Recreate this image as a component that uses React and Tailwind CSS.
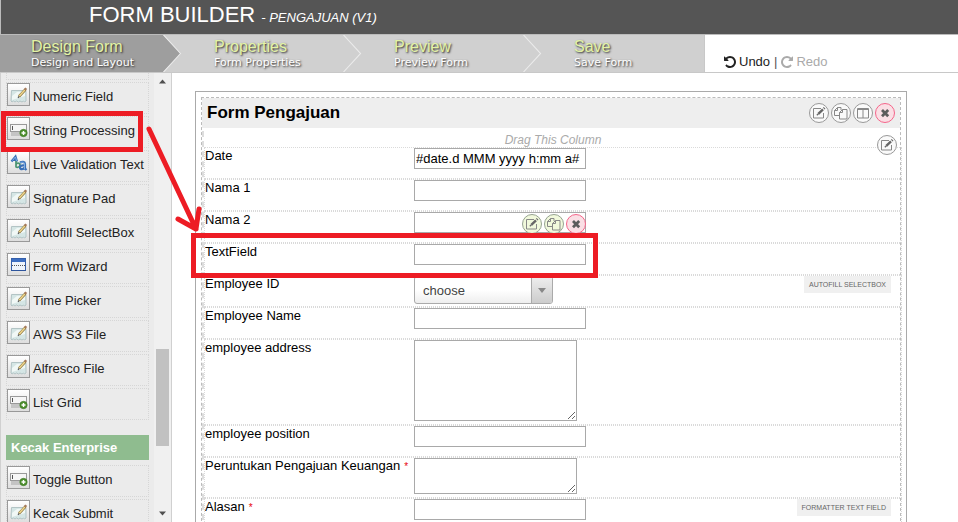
const steps = [
  { title: "Design Form", note: "Design and Layout", active: true },
  { title: "Properties", note: "Form Properties" },
  { title: "Preview", note: "Preview Form" },
  { title: "Save", note: "Save Form", last: true },
];

const palette = [
  ["Numeric Field", "edit"],
  ["String Processing", "add"],
  ["Live Validation Text", "text"],
  ["Signature Pad", "edit"],
  ["Autofill SelectBox", "edit"],
  ["Form Wizard", "window"],
  ["Time Picker", "edit"],
  ["AWS S3 File", "edit"],
  ["Alfresco File", "edit"],
  ["List Grid", "add"],
];

const enterprise = [
  ["Toggle Button", "add"],
  ["Kecak Submit", "edit"],
];

const textShadow = "[text-shadow:1px_1px_2px_#222]";

function Chevron({ active }) {
  return (
    <svg className="h-full w-[19px] shrink-0" viewBox="0 0 19 37" aria-hidden="true">
      {active && <path d="M0 0 L18 18.5 L0 37 Z" fill="#9e9e9e" />}
      <path d="M0.5 0 L17.5 18.5 L0.5 37" fill="none" stroke="#ececec" strokeWidth="1.1" />
    </svg>
  );
}

function Step({ title, note, active, last }) {
  return (
    <a
      href="#"
      className={`flex h-full bg-[#d0d0d0] ${active ? "w-[182px]" : last ? "w-[162px]" : "w-[180px]"}`}
    >
      <span className={`flex h-full flex-1 flex-col whitespace-nowrap pt-[3px] ${active ? "bg-[#9e9e9e] pl-[31px]" : "pl-8"}`}>
        <span className={`text-[16px] leading-[18px] text-[#e3f3a5] ${textShadow}`}>{title}</span>
        <span className={`font-['DejaVu_Sans',sans-serif] text-[11px] leading-[13px] text-white ${textShadow}`}>{note}</span>
      </span>
      {!last && <Chevron active={active} />}
    </a>
  );
}

function RotateIcon({ forward }) {
  return (
    <svg className="size-3" viewBox="0 128 1536 1536" fill="currentColor" aria-hidden="true">
      <path
        transform={forward ? "matrix(-1 0 0 1 1536 0)" : undefined}
        d="M1536 896q0 156-61 298t-164 245-245 164-298 61q-172 0-327-72.5t-264-204.5q-7-10-6.5-22.5t8.5-20.5l137-138q10-9 25-9 16 2 23 12 73 95 179 147t225 52q104 0 198.500-40.500t163.500-109.500 109.500-163.500 40.500-198.500-40.500-198.500-109.500-163.500-163.500-109.500-198.500-40.500q-98 0-188 35.500t-160 101.500l137 138q31 30 14 69-17 40-59 40h-448q-26 0-45-19t-19-45v-448q0-42 40-59 39-17 69 14l130 129q107-101 244.500-156.500t284.500-55.500q156 0 298 61t245 164 164 245 61 298z"
      />
    </svg>
  );
}

function PaletteIcon({ kind }) {
  return (
    <span className="h-[23px] w-[23px] shrink-0 border border-[#999] bg-linear-to-b from-white to-[#dedede]">
      <svg viewBox="0 0 21 21" className="block h-full w-full" aria-hidden="true">
        {kind === "edit" && (
          <g>
            <path d="M3.5 6.500h13.500l1 1v9.500l-1.500 1-1-1-1.500 1-2-1-1.500 1-2-1-1.500 1-1.500-1-1.500 1-1-1z" fill="#d5e6e5" stroke="#b3c4c5" />
            <path d="M4 12 L9 8 L17 7.500 L17 12 L4 16 Z" fill="#f1f8f6" />
            <path d="M11 12.500 L17.500 5.500" stroke="#8f7a45" strokeWidth="2.600" />
            <path d="M11.200 12.200 L16.800 6" stroke="#f0d68c" strokeWidth="1.500" />
            <path d="M16.800 5.800 L18.300 4.200" stroke="#a67a5c" strokeWidth="2.400" />
            <path d="M10 13.700 L11.200 12.400" stroke="#555" strokeWidth="1.300" />
          </g>
        )}
        {kind === "add" && (
          <g>
            <rect x="3" y="12" width="15" height="6" fill="#c4c4c4" />
            <rect x="2.5" y="6.500" width="16" height="7" fill="#f6f6f6" stroke="#999" />
            <path d="M4.500 8v4" stroke="#555" />
            <circle cx="15.5" cy="15" r="3.700" fill="#4d8f2e" stroke="#3a7524" strokeWidth="0.600" />
            <path d="M15.500 13v4M13.500 15h4" stroke="#fff" strokeWidth="1.400" />
          </g>
        )}
        {kind === "window" && (
          <g>
            <rect x="3.500" y="4.500" width="14" height="12" fill="#eef4fb" stroke="#3560ac" />
            <rect x="4" y="5" width="13" height="3" fill="#3d6fc2" />
            <path d="M4 11.500h13" stroke="#555" strokeDasharray="1 1" />
            <path d="M3 16.500h15" stroke="#2d549c" />
          </g>
        )}
        {kind === "text" && (
          <g fill="none">
            <path d="M3.500 9.500 L7.500 4.500 L9 9.500 M4.500 8h4.500" stroke="#3a70b8" strokeWidth="2.200" />
            <path d="M4.500 8.500 L7.400 5 L8.600 9" stroke="#8fbcec" strokeWidth="0.800" />
            <path d="M8 9v6.500 M8 13c0-2.500 4-2.500 4 0s-4 3-4 1.500" stroke="#4b9472" strokeWidth="1.700" />
            <path d="M12 10.500c2-1 5-1 5 1.500v4.500l1.500 1.500 M16.500 13.500c-3-.5-4.500.5-4.500 2.300s3.500 2 4.500-.3" stroke="#3a70b8" strokeWidth="2.200" />
            <path d="M12.500 10.500c2-.8 4-.4 4 1.500v5" stroke="#8fbcec" strokeWidth="0.800" />
          </g>
        )}
      </svg>
    </span>
  );
}

function PaletteItem({ name, kind }) {
  return (
    <li className="flex h-8 cursor-move items-start gap-[3px] border border-dotted border-[#d6d6d6] whitespace-nowrap">
      <PaletteIcon kind={kind} />
      <span className="pt-[6px] leading-4">{name}</span>
    </li>
  );
}

function PaletteList({ items }) {
  return (
    <ul className="flex flex-col gap-0.5">
      {items.map(([name, kind]) => (
        <PaletteItem key={name} name={name} kind={kind} />
      ))}
    </ul>
  );
}

const tones = {
  plain: "border-[#999] bg-[#fafafa]",
  green: "border-[#96a391] bg-[#f1f9dc]",
  red: "border-[#f5658a] bg-[#fadfe5]",
};

function RoundButton({ icon, label, tone = "plain" }) {
  return (
    <button type="button" aria-label={label} className={`h-5 w-5 rounded-full border ${tones[tone]}`}>
      <svg viewBox="0 0 18 18" className="block h-full w-full" fill="none" stroke="#888" aria-hidden="true">
        {icon === "edit" && (
          <g>
            <path d="M11 4.500h-7.500v9.500h10v-5" />
            <path d="M8.300 9.800 L13 5.300" stroke="#666" strokeWidth="2.400" />
            <path d="M6.800 11.300 L8.500 9.800" stroke="#666" strokeWidth="1.200" />
            <path d="M13.800 4.600l.8-.8" stroke="#666" strokeWidth="2.400" />
          </g>
        )}
        {icon === "copy" && (
          <g>
            <path d="M7 11.500h-4.500v-5l3-3h3.500v2.500 M5.500 3.500v3h-3" />
            <path d="M10.500 5.500h4.500v9.500h-7.500v-6.500z M10.500 5.500v3h-3" />
          </g>
        )}
        {icon === "columns" && <path d="M3.500 4.500h11v9.500h-11z M3.500 5.500h11 M9 5v9" />}
        {icon === "delete" && <path d="M6 6l6.200 6.200M12.200 6l-6.200 6.200" stroke="#5c5c5c" strokeWidth="2.800" />}
      </svg>
    </button>
  );
}

function Field({ id, label, required, height = "h-8", tag, children }) {
  return (
    <div className={`relative flex items-start border border-dotted border-[#dadada] ${height}`}>
      <label htmlFor={id} className="w-[209px] shrink-0 whitespace-nowrap leading-4">
        {label}
        {required && <span className="ml-1 text-[10px] text-red-600">*</span>}
      </label>
      {children}
      {tag && (
        <span className="absolute top-0 right-[10px] h-[17px] bg-[#f0f0f0] px-[5px] text-[7px] leading-[17px] text-[#666] uppercase">
          {tag}
        </span>
      )}
    </div>
  );
}

function TextBox({ id, value = "" }) {
  return <input id={id} type="text" defaultValue={value} className="h-[21px] w-[172px] border border-[#a9a9a9] bg-white px-px" />;
}

function TextArea({ id, height }) {
  return <textarea id={id} className={`block w-[163px] resize border border-[#a9a9a9] bg-white ${height}`} />;
}

export default function App() {
  return (
    <div className="relative flex h-screen flex-col overflow-hidden bg-white font-['Liberation_Sans',Arial,sans-serif] text-[13px] text-black">
      <header className="flex h-[35px] shrink-0 items-baseline gap-[6px] border-b border-l border-[#bbb] bg-[#555] pt-[2px] pl-[88px] text-white">
        <h1 className="text-[22px] leading-[26px]">FORM BUILDER</h1>
        <span className="text-[13px] italic">- PENGAJUAN (V1)</span>
      </header>

      <nav className="flex h-[38px] shrink-0 border-b border-[#c8c8c8]">
        {steps.map((step) => (
          <Step key={step.title} {...step} />
        ))}
        <div className="flex flex-1 items-end gap-1 border-l border-[#c8c8c8] pb-[2px] pl-[19px] leading-4">
          <button type="button" className="flex items-center gap-[3px] text-[#222]">
            <RotateIcon />
            Undo
          </button>
          <span className="text-[#555]">|</span>
          <button type="button" className="flex items-center gap-[3px] text-[#aaa]">
            <RotateIcon forward />
            Redo
          </button>
        </div>
      </nav>

      <div className="flex min-h-0 flex-1">
        <aside className="flex w-[172px] shrink-0 border-x border-[#d0d0d0] bg-[#ebebeb] text-[#222]">
          <div className="min-w-0 flex-1 overflow-hidden pr-[5px] pl-[5px]">
            <div className="mb-0.5 h-[7px] border border-t-0 border-dotted border-[#d6d6d6]" />
            <PaletteList items={palette} />
            <h2 className="mt-[15px] mb-[5px] h-[25px] bg-[#8fbc8f] pl-[5px] font-bold leading-[25px] text-white">Kecak Enterprise</h2>
            <PaletteList items={enterprise} />
          </div>
          <div className="flex w-[17px] shrink-0 flex-col items-center bg-[#f0f0f0]">
            <svg viewBox="0 0 17 17" className="size-[17px]" aria-hidden="true">
              <path d="M5 10.500 L8.500 6.500 L12 10.500 Z" fill="#505050" />
            </svg>
            <div className="flex w-full flex-1 flex-col items-center pt-[259px]">
              <div className="h-[97px] w-[13px] bg-[#c1c1c1]" />
            </div>
            <svg viewBox="0 0 17 17" className="size-[17px]" aria-hidden="true">
              <path d="M5 6.500 L8.500 10.500 L12 6.500 Z" fill="#505050" />
            </svg>
          </div>
        </aside>

        <main className="min-w-0 flex-1 overflow-hidden pt-[18px] pr-[51px] pl-[23px]">
          <div className="border border-[#aaa] p-[5px]">
            <section className="border border-dashed border-[#bbb]">
              <div className="flex h-[30px] items-center justify-between bg-[#eee] pr-[5px] pl-[5px]">
                <h2 className="text-[17px] leading-5 font-bold">Form Pengajuan</h2>
                <div className="flex gap-0.5">
                  <RoundButton icon="edit" label="Edit section" />
                  <RoundButton icon="copy" label="Copy section" />
                  <RoundButton icon="columns" label="Section columns" />
                  <RoundButton icon="delete" label="Delete section" tone="red" />
                </div>
              </div>

              <div className="relative mt-[3px] -mr-0.5 border-l-2 border-dashed border-[#ddd]">
                <p className="h-4 text-center text-[12px] leading-[18px] text-[#aaa] italic">Drag This Column</p>
                <div className="absolute top-1 right-[5px] z-10 flex">
                  <RoundButton icon="edit" label="Edit column" />
                </div>

                <Field id="date" label="Date">
                  <TextBox id="date" value="#date.d MMM yyyy h:mm a#" />
                </Field>
                <Field id="nama1" label="Nama 1">
                  <TextBox id="nama1" />
                </Field>
                <Field id="nama2" label="Nama 2">
                  <div className="relative flex">
                    <TextBox id="nama2" />
                    <div className="absolute top-0.5 right-0 flex gap-0.5">
                      <RoundButton icon="edit" label="Edit field" tone="green" />
                      <RoundButton icon="copy" label="Copy field" tone="green" />
                      <RoundButton icon="delete" label="Delete field" tone="red" />
                    </div>
                  </div>
                </Field>
                <Field id="textfield" label="TextField">
                  <TextBox id="textfield" />
                </Field>
                <Field id="employeeId" label="Employee ID" tag="Autofill SelectBox">
                  <div className="relative flex h-7">
                    <select
                      id="employeeId"
                      className="h-7 w-[139px] appearance-none rounded-[3px] border border-[#aaa] bg-linear-to-b from-white from-50% to-[#eee] pt-0.5 pl-2 text-[#444]"
                    >
                      <option>choose</option>
                    </select>
                    <span className="pointer-events-none absolute top-px right-px flex h-[26px] w-[21px] items-center justify-center rounded-r-[2px] border-l border-[#aaa] bg-linear-to-b from-[#eee] to-[#ccc]">
                      <svg viewBox="0 0 8 5" className="h-[5px] w-2" aria-hidden="true">
                        <path d="M0 0h8L4 5z" fill="#888" />
                      </svg>
                    </span>
                  </div>
                </Field>
                <Field id="employeeName" label="Employee Name">
                  <TextBox id="employeeName" />
                </Field>
                <Field id="employeeAddress" label="employee address" height="h-[86px]">
                  <TextArea id="employeeAddress" height="h-[81px]" />
                </Field>
                <Field id="employeePosition" label="employee position">
                  <TextBox id="employeePosition" />
                </Field>
                <Field id="peruntukan" label="Peruntukan Pengajuan Keuangan" required height="h-[41px]">
                  <TextArea id="peruntukan" height="h-9" />
                </Field>
                <Field id="alasan" label="Alasan" required tag="Formatter Text Field">
                  <TextBox id="alasan" />
                </Field>
              </div>
            </section>
          </div>
        </main>
      </div>

      {/* Red callouts linking the palette item to the field it creates */}
      <svg
        className="pointer-events-none absolute top-0 left-0 z-20 h-[300px] w-[600px]"
        viewBox="0 0 600 300"
        fill="none"
        stroke="#ed1c24"
        strokeWidth="5"
        aria-hidden="true"
      >
        <rect x="3.5" y="113.5" width="137" height="36" />
        <rect x="193.5" y="235.5" width="402" height="40" />
        <path d="M149 129 L196 229 M178 219 L196 229 M199 209 L196 229" strokeLinecap="round" strokeLinejoin="round" />
      </svg>
    </div>
  );
}
